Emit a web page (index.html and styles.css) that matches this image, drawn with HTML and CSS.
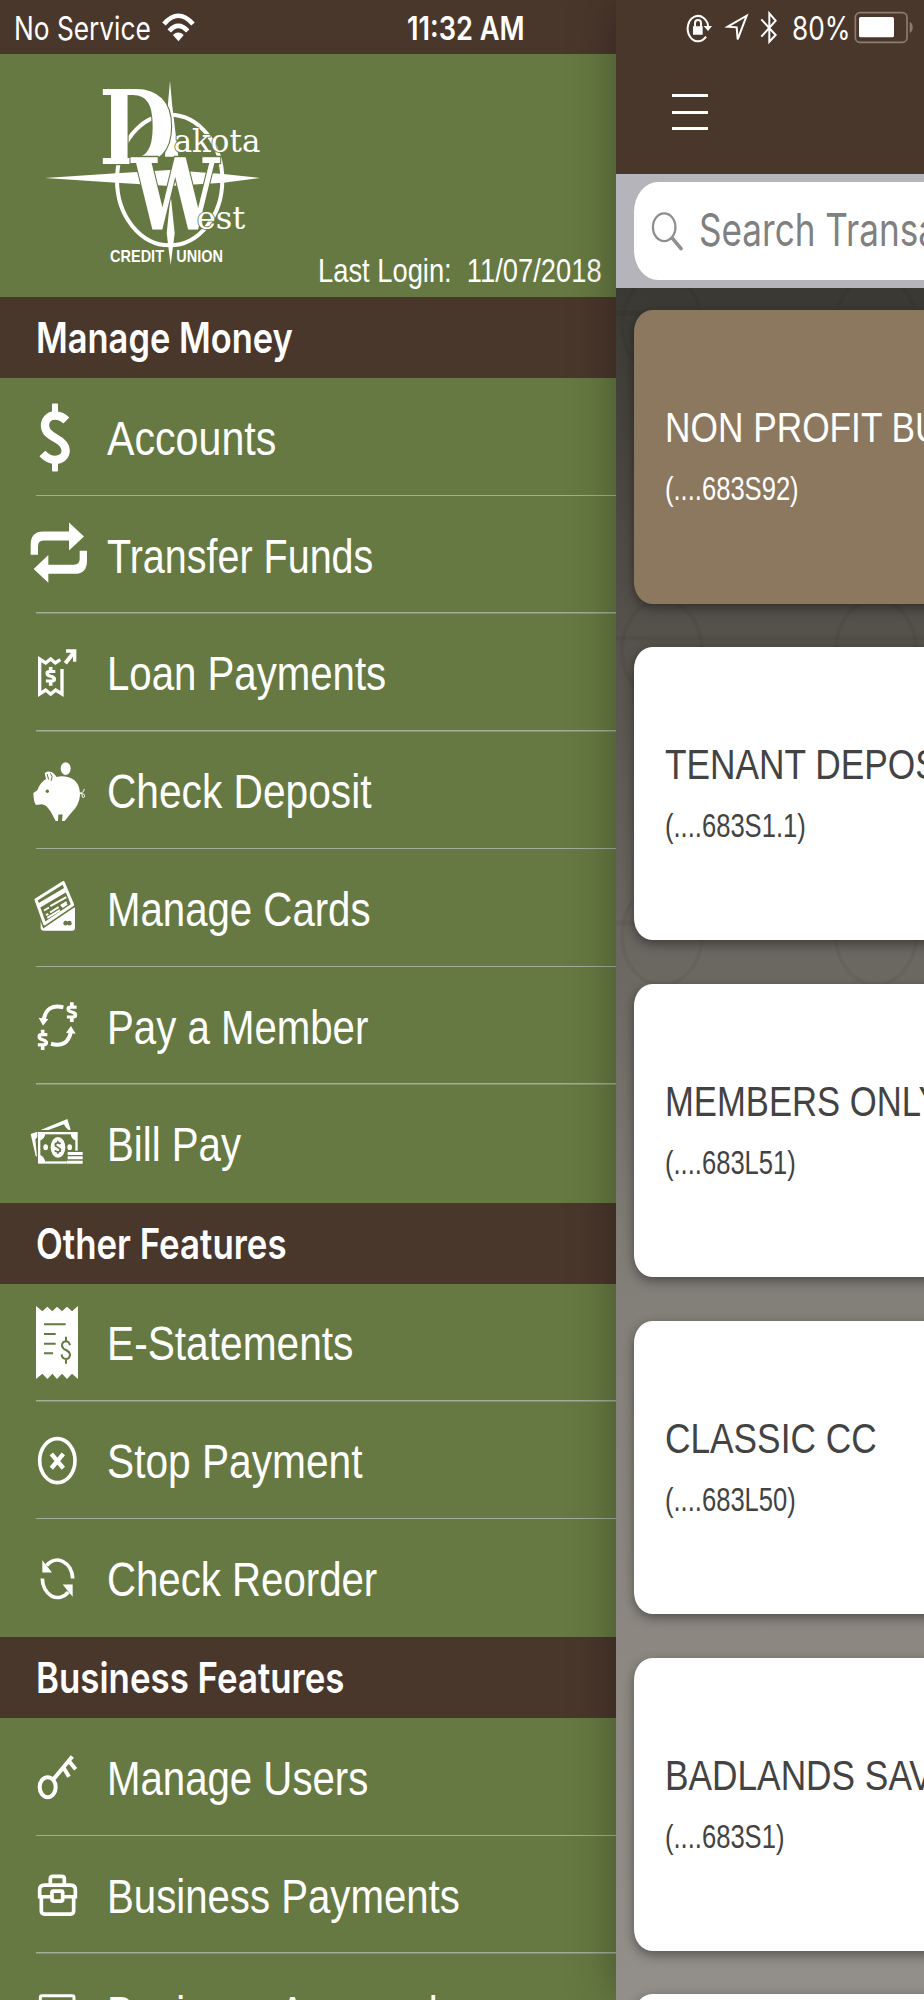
FILE: index.html
```html
<!DOCTYPE html>
<html lang="en">
<head>
<meta charset="utf-8">
<title>Dakota West Credit Union</title>
<link rel="stylesheet" href="styles.css">
</head>
<body>
<svg class="defs" width="0" height="0"><symbol id="dollar" viewBox="118 340 94 209" preserveAspectRatio="none"><path d="M199 393Q184 378 165 378C146 378 135 392 135 408C135 428 150 437 165 445C182 454 197 464 197 483C197 500 184 511 165 511Q145 511 127 492" fill="none" stroke="currentColor" stroke-width="25"/><path d="M156 345q0-3 3-3h12q3 0 3 3v30h-18zM156 515h18v28q0 3-3 3h-12q-3 0-3-3z" fill="currentColor"/></symbol>
<symbol id="dollar-bold" viewBox="118 340 94 209" preserveAspectRatio="none"><path d="M206 393H160Q133 393 133 412Q133 434 165 444Q197 454 197 476Q197 496 170 496H122M165 342V390M165 499V547" fill="none" stroke="currentColor" stroke-width="32"/></symbol></svg>
<div class="phone">
  <aside class="drawer">
    <div class="status status-left">
      <span class="fit carrier">No Service</span>
      <svg class="wifi" viewBox="486 36 100 90"><g fill="none" stroke="#fff" stroke-width="14"><path d="M492 72Q535 22 580 72"/><path d="M508 93Q535 62 564 93"/></g><path d="M519 105Q535 90 552 105L536 124Z" fill="#fff"/></svg>
      <span class="fit clock">11:32 AM</span>
    </div>
    <div class="brand">
      <svg class="logo" viewBox="0 162 930 729">
        <g fill="#fff"><ellipse cx="509" cy="540" rx="158" ry="196" fill="none" stroke="#fff" stroke-width="12"/>
        <path d="M510 243L516 310L535 470H495L504 310ZM135 534L350 520L509 510L670 522L780 534L670 548L509 558L350 548ZM512 585L524 700L512 795L500 700Z"/></g>
        <g class="serif big"><text x="296" y="493" font-size="309" textLength="228" lengthAdjust="spacingAndGlyphs">D</text>
        <text x="394" y="690" font-size="295" textLength="264" lengthAdjust="spacingAndGlyphs">W</text></g>
        <g class="serif small"><text x="521" y="455" font-size="94" textLength="260" lengthAdjust="spacingAndGlyphs">akota</text>
        <text x="590" y="687" font-size="94" textLength="146" lengthAdjust="spacingAndGlyphs">est</text></g>
        <g class="caps"><text x="330" y="786" textLength="162" lengthAdjust="spacingAndGlyphs">CREDIT</text><text x="529" y="786" textLength="140" lengthAdjust="spacingAndGlyphs">UNION</text></g>
      </svg>
      <span class="fit login">Last Login:&nbsp; 11/07/2018</span>
    </div>

    <h2 class="section"><span class="fit">Manage Money</span></h2>
    <ul class="menu">
      <li><svg viewBox="0 265.5 300 353.25"><use href="#dollar" x="118" y="340" width="94" height="209"/></svg><span class="fit widest">Accounts</span></li>
      <li><svg viewBox="0 618.75 300 353.25"><path fill="currentColor" d="M92 795V765Q92 725 130 725H207V698L252 740L207 782V752H130Q114 752 114 770V795ZM261 783V812Q261 852 225 852H145V879L101 838L145 796V825H222Q239 825 239 808V783Z"/></svg><span class="fit narrow">Transfer Funds</span></li>
      <li><svg viewBox="0 -18 300 353.25"><g fill="none" stroke="currentColor" stroke-width="10"><path d="M181 119L166 129L152 117L137 129L119 117V222L137 210L152 222L167 210L186 222V147"/><path d="M196 130L222 97" stroke-width="12"/><path d="M198 93H224V125"/></g><path fill="currentColor" d="M206 90H228V118Z"/><use href="#dollar-bold" x="136" y="140" width="32" height="58"/></svg><span class="fit">Loan Payments</span></li>
      <li><svg viewBox="0 335.25 300 353.25"><g fill="currentColor"><ellipse cx="197" cy="445" rx="15" ry="19"/><path d="M100 518L112 510Q120 487 138 476L134 458Q152 447 164 463L170 470Q183 467 195 469Q240 475 240 525Q238 555 212 580L194 602H186L188 583H175L174 602H167L152 574Q138 552 125 552L108 554Q101 545 100 518Z"/></g><path d="M238 518Q250 520 253 506M240 520Q256 518 253 530Q246 537 246 521" fill="none" stroke="currentColor" stroke-width="3"/><circle class="cut" cx="142" cy="513" r="5"/><path class="cutline" d="M141 461L146 478M151 459Q161 468 153 482" stroke-width="3"/></svg><span class="fit wide">Check Deposit</span></li>
      <li><svg viewBox="0 688.5 300 353.25"><path fill="currentColor" d="M122 895L225 863V925Q225 934 216 934H131Q122 934 122 925Z"/><path class="cut" d="M108 841L190 789L218 856L134 913Z" stroke="#667942" stroke-width="18"/><path d="M108 841L190 789L218 856L134 913Z" fill="none" stroke="currentColor" stroke-width="9" stroke-linejoin="round"/><path d="M117 858L200 809" stroke="currentColor" stroke-width="14"/><g stroke="currentColor" stroke-width="6"><path d="M132 873L147 864M151 860L199 833M138 887L145 883M150 879L176 863M182 859L200 848M142 895L180 872M186 863L201 853"/></g><g class="cut"><ellipse cx="197" cy="911" rx="7" ry="7"/><ellipse cx="208" cy="911" rx="7" ry="7"/></g></svg><span class="fit">Manage Cards</span></li>
      <li><svg viewBox="0 21.75 300 353.25"><g fill="none" stroke="currentColor" stroke-width="12"><path d="M190 143Q140 130 131 180"/><path d="M153 252Q203 266 213 215"/></g><path fill="currentColor" d="M116 174L145 178L129 198ZM198 219L227 222L213 199Z"/><use href="#dollar-bold" x="199" y="127" width="33" height="60"/><use href="#dollar-bold" x="112" y="209" width="32" height="62"/></svg><span class="fit">Pay a Member</span></li>
      <li><svg viewBox="0 375 300 353.25"><path fill="currentColor" d="M122 510L202 477L212 509L205 510Q196 503 192 493L145 510ZM92 522L112 515V532L106 538L111 590L107 588Z"/><rect x="117.500" y="519.500" width="112" height="88" fill="none" stroke="currentColor" stroke-width="7"/><path fill="currentColor" d="M118 520H136Q134 540 118 542ZM229 520H212Q213 540 229 542ZM118 608V584Q134 588 136 608Z"/><ellipse cx="174" cy="562" rx="22" ry="31" fill="currentColor"/><ellipse cx="137" cy="562" rx="7" ry="9" fill="currentColor"/><ellipse cx="209" cy="562" rx="7" ry="9" fill="currentColor"/><use class="cuttext" href="#dollar" x="162" y="541" width="23" height="42"/><path class="cut" d="M200 572H250V613H200Z"/><path fill="currentColor" d="M203 576h45v9h-45zM203 589h45v9h-45zM200 602h48v9h-48z"/></svg><span class="fit">Bill Pay</span></li>
    </ul>

    <h2 class="section"><span class="fit wide">Other Features</span></h2>
    <ul class="menu">
      <li><svg viewBox="0 252 300 353.25"><path fill="currentColor" d="M108 318L127 334L142 320L157 334L171 320L186 334L201 320L216 334L234 318V537L216 521L201 537L186 521L171 537L157 521L142 537L127 521L108 537Z"/><path class="cutline" d="M132 373H197M132 402H167M132 431H167M132 460H159M210 436Q207 424 198 424Q186 425 186 437Q187 446 198 450Q210 456 210 465Q208 477 198 477Q186 476 185 463M198 410V424M198 477V491" stroke-width="6"/></svg><span class="fit wide">E-Statements</span></li>
      <li><svg viewBox="0 -114.75 300 353.25"><g fill="none" stroke="currentColor" stroke-width="11"><ellipse cx="172" cy="61" rx="53" ry="66"/><path d="M154 41L190 84M190 41L154 84" stroke-width="13"/></g></svg><span class="fit wide">Stop Payment</span></li>
      <li><svg viewBox="0 238.5 300 353.25"><g fill="none" stroke="currentColor" stroke-width="11"><path d="M218 417A46 57 0 0 0 140 378M127 417A46 57 0 0 0 205 458"/></g><path fill="currentColor" d="M127 362V399H156ZM218 472V435H188Z"/></svg><span class="fit">Check Reorder</span></li>
    </ul>

    <h2 class="section"><span class="fit wide">Business Features</span></h2>
    <ul class="menu">
      <li><svg viewBox="0 115.5 300 353.25"><g fill="none" stroke="currentColor" stroke-width="12"><ellipse cx="143" cy="323" rx="24" ry="30"/><path d="M159 301L217 231M206 244L227 269M190 263L207 292" /></g></svg><span class="fit">Manage Users</span></li>
      <li><svg viewBox="0 468.75 300 353.25"><g fill="none" stroke="currentColor" stroke-width="11"><path d="M151 612V597Q151 590 159 590H185Q193 590 193 597V612M119 656V630Q119 616 133 616H212Q226 616 226 630V656M124 652V693Q124 703 134 703H211Q221 703 221 693V652M119 651H155M190 651H226"/><rect x="156" y="634" width="32" height="30" rx="4"/></g></svg><span class="fit">Business Payments</span></li>
      <li><svg viewBox="0 822 300 353.25"><rect x="121" y="947" width="101" height="110" rx="5" fill="none" stroke="currentColor" stroke-width="9"/></svg><span class="fit">Business Approvals</span></li>
    </ul>
  </aside>

  <main class="page">
    <div class="status">
      <svg class="glyphs" viewBox="18 0 522 162"><g fill="none" stroke="#fff" stroke-width="6"><path d="M288 110A31 38 0 1 1 295 83"/><path d="M255 80V70Q255 60 264 60Q273 60 273 70V80"/><path d="M353 80L410 47L383 118L380 82Z"/><path d="M454 58L497 105L478 125V40L497 62L454 110"/></g><path fill="#fff" d="M281 78H306L294 93ZM249 79H278V104H249Z"/></svg>
      <span class="fit percent">80%</span>
      <svg class="battery" viewBox="729 0 213 162"><rect x="736" y="38" width="155" height="89" rx="14" fill="none" stroke="#8b7d73" stroke-width="5"/><rect x="747" y="51" width="105" height="61" rx="5" fill="#fff"/><path fill="#8b7d73" d="M899 66Q908 70 908 82Q908 95 899 99Z"/></svg>
    </div>
    <div class="nav"><div class="burger"><i></i><i></i><i></i></div></div>
    <div class="search"><div class="field"><svg viewBox="120 628 104 124"><ellipse cx="162" cy="677" rx="34" ry="42" fill="none" stroke="#8e8e93" stroke-width="7"/><path d="M187 711L213 742" stroke="#8e8e93" stroke-width="11" stroke-linecap="round"/></svg><span class="fit">Search Transactions</span></div></div>
    <div class="cards">
      <svg class="pattern" viewBox="616 288 308 1712"><g fill="none" stroke="#000" stroke-opacity=".045" stroke-width="4"><g id="pair"><ellipse cx="662" cy="650" rx="40" ry="50"/><ellipse cx="876" cy="650" rx="40" ry="50"/><path d="M616 638H924" stroke-width="5"/></g><use href="#pair" y="-325"/><use href="#pair" y="285"/></g></svg>
      <article class="card active"><h3 class="fit">NON PROFIT BUSINESS</h3><p class="fit">(....683S92)</p></article>
      <article class="card"><h3 class="fit">TENANT DEPOSIT</h3><p class="fit">(....683S1.1)</p></article>
      <article class="card"><h3 class="fit narrow">MEMBERS ONLY</h3><p class="fit">(....683L51)</p></article>
      <article class="card"><h3 class="fit">CLASSIC CC</h3><p class="fit">(....683L50)</p></article>
      <article class="card"><h3 class="fit">BADLANDS SAVINGS</h3><p class="fit">(....683S1)</p></article>
      <article class="card"></article>
    </div>
  </main>
</div>
</body>
</html>
```
FILE: styles.css
```css
* { box-sizing: border-box; margin: 0; padding: 0; }
body { width: 924px; height: 2000px; overflow: hidden; font-family: "Liberation Sans", Arial, sans-serif; }
.defs { display: block; }
.phone { display: flex; width: 924px; height: 2000px; overflow: hidden; }
.fit { display: inline-block; white-space: nowrap; transform: scaleX(.82); transform-origin: 0 50%; }
.fit.narrow { transform: scaleX(.806); }
.fit.wide { transform: scaleX(.83); }
.fit.widest { transform: scaleX(.84); }

.drawer { width: 616px; height: 2000px; flex: none; overflow: hidden; background: #667942; color: #fff; }
.status { display: flex; align-items: center; height: 54px; background: #4a372c; color: #fff; font-family: Inter, "Liberation Sans", sans-serif; font-size: 32px; }
.status-left { padding-left: 14px; }
.carrier { width: 148px; padding-top: 2px; }
.wifi { width: 33px; height: 30px; flex: none; }
.fit.clock { margin-left: 212px; padding-top: 2px; font-weight: 600; transform: scaleX(.85); }

.brand { display: flex; align-items: flex-end; height: 243.2px; }
.logo { width: 310px; height: 243px; flex: none; align-self: flex-start; }
.serif { font-family: "DejaVu Serif", "Liberation Serif", serif; fill: #fff; stroke: #667942; paint-order: stroke; }
.big { font-weight: 700; stroke-width: 8px; }
.small { font-weight: 400; stroke-width: 5px; }
.caps { font: 700 49px "Liberation Sans", Arial, sans-serif; fill: #fff; }
.fit.login { margin: 0 0 7.5px 8px; font-size: 33px; line-height: 38px; transform: scaleX(.828); }

.section { display: flex; align-items: center; height: 81.25px; padding-left: 36px; background: #4a372c; font-family: Inter, "Liberation Sans", sans-serif; font-size: 42px; font-weight: 600; }
.menu { list-style: none; }
.menu li { display: flex; align-items: center; height: 117.75px; font-size: 49px; background: linear-gradient(#a4ad98, #a4ad98) no-repeat 36px 100% / 100% 1.5px; }
.menu li:last-child { background: none; }
.menu svg { width: 100px; height: 117.75px; flex: none; margin-right: 7px; }
.menu .fit { padding-top: 1px; }
.cut { fill: #667942; }
.cutline { fill: none; stroke: #667942; }
.cuttext { color: #667942; }

.page { position: relative; width: 308px; height: 2000px; flex: none; display: flex; flex-direction: column; background: linear-gradient(#3b3934 288px, #54504a 620px, #6b6761 960px, #837f79 1300px, #8c8881 1640px, #928e89 2000px); box-shadow: 0 0 46px rgba(0, 0, 0, .32); }
.glyphs { width: 174px; height: 54px; flex: none; }
.percent { width: 63px; margin-left: 2px; padding-top: 2px; }
.battery { width: 71px; height: 54px; flex: none; margin-left: -2px; }
.nav { height: 120px; background: #4a372c; padding: 40px 0 0 56px; }
.burger { display: grid; gap: 13.500px; width: 36px; }
.burger i { height: 3px; background: #fff; }
.search { height: 114px; padding: 8px 0 8px 18px; background: #b5b4bb; }
.field { display: flex; align-items: center; height: 98px; padding-left: 16px; overflow: hidden; border-radius: 24px 0 0 24px / 30px; background: #fff; color: #808080; font-size: 45px; font-family: Inter, "Liberation Sans", sans-serif; }
.field svg { width: 35px; height: 41px; flex: none; margin-right: 14px; }
.field .fit { transform: scaleX(.78); margin-top: -3px; }
.cards { position: relative; height: 1712px; display: flex; flex-direction: column; gap: 43.4px; padding: 22px 0 0 18px; overflow: hidden; }
.pattern { position: absolute; inset: 0; width: 308px; height: 1712px; }
.card { position: relative; flex: none; width: 340px; height: 293.5px; padding: 92px 0 0 31px; border-radius: 18px / 22px; background: #fff; color: #434343; box-shadow: 0 4px 12px rgba(0, 0, 0, .4); }
.card h3 { display: block; font-size: 43px; line-height: 50px; font-weight: 400; }
.card p { display: block; margin-top: 18px; font-size: 33px; line-height: 38px; transform: scaleX(.775); }
.active { background: #8c785f; color: #fff; }
```
